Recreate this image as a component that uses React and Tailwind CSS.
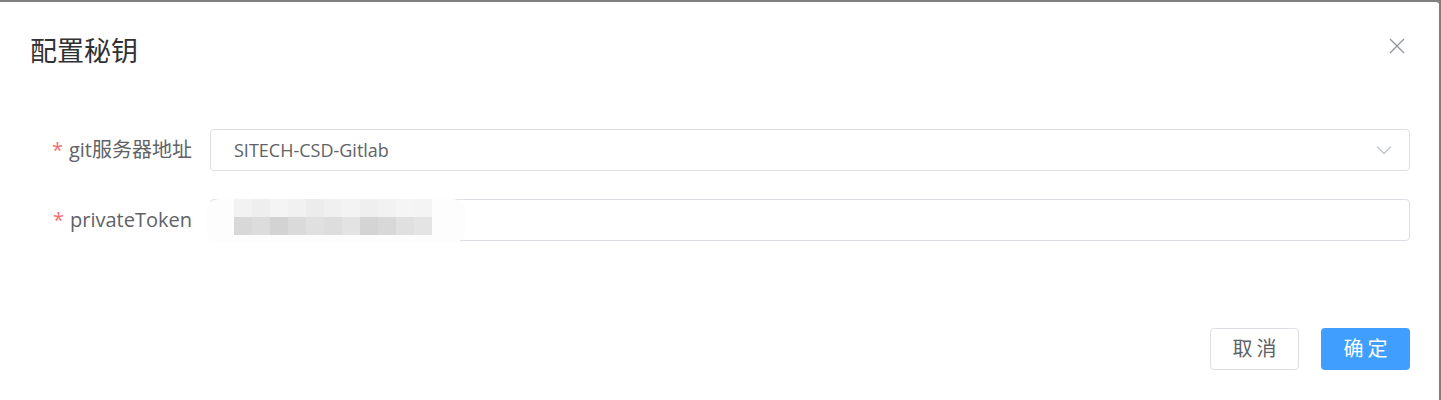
import React from "react";

const FONT = { fontFamily: '"Open Sans", "Noto Sans CJK SC", sans-serif' };

const topRow = ["bg-[#f2f2f2]", "bg-[#eeeeee]", "bg-[#f4f4f4]", "bg-[#f1f1f1]", "bg-[#ececec]", "bg-[#f0f0f0]", "bg-[#f3f3f3]", "bg-[#efefef]", "bg-[#f2f2f2]", "bg-[#f5f5f5]", "bg-[#f4f4f4]"];
const bottomRow = ["bg-[#d8d8d8]", "bg-[#dcdcdc]", "bg-[#d3d3d3]", "bg-[#dadada]", "bg-[#e0e0e0]", "bg-[#dddddd]", "bg-[#e3e3e3]", "bg-[#d4d4d4]", "bg-[#d8d8d8]", "bg-[#e0e0e0]", "bg-[#e4e4e4]"];

function Label({ children }) {
  return (
    <label className="w-[180px] shrink-0 whitespace-nowrap pr-[18px] text-right text-[20px] leading-[42px] text-[#606266]">
      <span className="mr-[6px] text-[#f56c6c]">*</span>
      {children}
    </label>
  );
}

function Blurred() {
  // pixelated mask over the token value
  return (
    <div className="absolute left-[-5px] top-[-1px] h-[44px] w-[260px] rounded-[14px] bg-[#fdfdfd]">
      <div className="ml-[28px] flex">
        {topRow.map((c, i) => (
          <div key={i} className={`h-[18px] w-[18px] ${c}`} />
        ))}
      </div>
      <div className="ml-[28px] flex">
        {bottomRow.map((c, i) => (
          <div key={i} className={`h-[18px] w-[18px] ${c}`} />
        ))}
      </div>
    </div>
  );
}

export default function App() {
  return (
    <div className="h-[400px] w-[1441px] bg-[#7f7f7f] pt-[2px]" style={FONT}>
      <div className="flex h-[398px] w-[1439px] flex-col rounded-tr-[3px] bg-white">
        <div className="flex items-start justify-between pl-[30px] pr-[34px] pt-[33px]">
          <h2 className="text-[27px] leading-[32px] text-[#303133]">配置秘钥</h2>
          <button className="mt-[3px] text-[#909399]">
            <svg width="16" height="16" viewBox="0 0 16 16" fill="none" stroke="currentColor" strokeWidth="1.3">
              <path d="M1 1L15 15M15 1L1 15" />
            </svg>
          </button>
        </div>

        <div className="mt-[62px] flex flex-col gap-[28px] pl-[30px] pr-[29px]">
          <div className="flex items-center">
            <Label>git服务器地址</Label>
            <div className="flex h-[42px] flex-1 items-center justify-between rounded-[4px] border border-[#dcdfe6] pl-[23px] pr-[17px]">
              <span className="text-[18px] text-[#606266]">SITECH-CSD-Gitlab</span>
              <svg width="16" height="10" viewBox="0 0 16 10" fill="none" stroke="#c0c4cc" strokeWidth="1.3">
                <path d="M1 1.5L8 8.5L15 1.5" />
              </svg>
            </div>
          </div>
          <div className="flex items-center">
            <Label>privateToken</Label>
            <div className="relative h-[42px] flex-1 rounded-[4px] border border-[#dcdfe6]">
              <Blurred />
            </div>
          </div>
        </div>

        <div className="mt-auto mb-[30px] flex justify-end gap-[22px] pr-[29px]">
          <button className="h-[42px] w-[89px] rounded-[4px] border border-[#dcdfe6] bg-white pl-[4px] text-[20px] tracking-[4px] text-[#606266]">
            取消
          </button>
          <button className="h-[42px] w-[89px] rounded-[4px] bg-[#409eff] pl-[4px] text-[20px] tracking-[4px] text-white">
            确定
          </button>
        </div>
      </div>
    </div>
  );
}
